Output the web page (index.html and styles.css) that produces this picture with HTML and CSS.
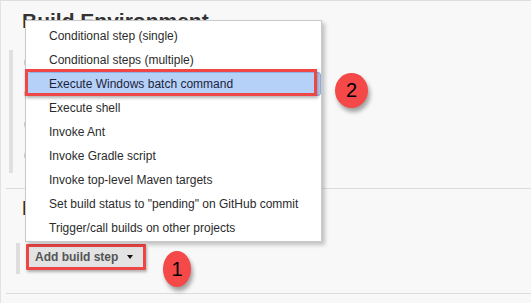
FILE: index.html
```html
<!DOCTYPE html>
<html lang="en">

<head>
    <meta charset="UTF-8">
    <title>Configure</title>
    <link rel="stylesheet" href="styles.css">
</head>

<body>
    <div class="page">
        <section class="block">
            <h2>Build Environment</h2>
            <div class="options">
                <div class="option"><span class="check"></span></div>
                <div class="option"><span class="check"></span></div>
                <div class="option"><span class="check"></span></div>
                <div class="option"><span class="check"></span></div>
            </div>
        </section>

        <section class="block">
            <h2>Build</h2>
            <div class="steps">
                <button class="add-step">Add build step <span class="caret"></span></button>
            </div>
        </section>

        <!-- dropdown opened from the button -->
        <ul class="menu">
            <li>Conditional step (single)</li>
            <li>Conditional steps (multiple)</li>
            <li class="active">Execute Windows batch command</li>
            <li>Execute shell</li>
            <li>Invoke Ant</li>
            <li>Invoke Gradle script</li>
            <li>Invoke top-level Maven targets</li>
            <li>Set build status to "pending" on GitHub commit</li>
            <li>Trigger/call builds on other projects</li>
        </ul>

        <!-- annotations -->
        <div class="mark mark-item"></div>
        <div class="badge badge-one">1</div>
        <div class="badge badge-two">2</div>
    </div>
</body>

</html>
```

FILE: styles.css
```css
html,
body {
    margin: 0;
    height: 100%;
}

body {
    font-family: "Liberation Sans", Arial, sans-serif;
    background-color: #f8f8f8;
}

.page {
    position: relative;
    min-height: 100%;
    box-sizing: border-box;
    border-top: 1px solid #dedede;
    border-left: 1px solid #e2e2e2;
    overflow: hidden;
}

.block {
    margin-left: 5px;
    border-bottom: 1px solid #dcdcdc;
}

.block:first-child {
    padding: 8px 0 15px;
}

.block:nth-child(2) {
    padding: 0 0 19px;
}

h2 {
    margin: 0 0 0 16px;
    font-size: 21px;
    line-height: 24px;
    font-weight: bold;
    color: #333;
}

.block:nth-child(2) h2 {
    margin-top: 7px;
}

.options {
    margin: 17px 0 0 3px;
    padding: 6px 0 11px 11px;
    border-left: 4px solid #e0e0e0;
    display: flex;
    flex-direction: column;
    gap: 18px;
}

.check {
    display: block;
    width: 11px;
    height: 11px;
    border: 1px solid #c2c2c2;
    border-radius: 50%;
    background: #fff;
}

.steps {
    margin: 23px 0 0 10px;
    padding: 1px 0 4px 6px;
    border-left: 4px solid #dedede;
    display: flex;
}

.add-step {
    display: flex;
    align-items: center;
    gap: 9px;
    height: 26px;
    padding: 0 10px 0 6px;
    border: 3px solid #ee4545;
    border-radius: 1px;
    background-color: #e3e3e3;
    box-shadow: 1px 2px 3px rgba(0, 0, 0, 0.3);
    font-family: inherit;
    font-size: 12px;
    font-weight: bold;
    color: #555;
}

.caret {
    width: 0;
    height: 0;
    border-left: 3.5px solid transparent;
    border-right: 3.5px solid transparent;
    border-top: 4px solid #111;
}

.menu {
    position: absolute;
    left: 24px;
    top: 19px;
    width: 297px;
    box-sizing: border-box;
    margin: 0;
    padding: 3px 0 1px;
    list-style: none;
    background: #fff;
    border: 1px solid #c9c9c9;
    box-shadow: 3px 3px 4px rgba(0, 0, 0, 0.22);
}

.menu li {
    height: 24px;
    line-height: 24px;
    padding-left: 23px;
    font-size: 12px;
    color: #2b2b2b;
    white-space: nowrap;
}

.menu li.active {
    margin: 0 0 0 1px;
    padding-left: 21px;
    background-color: #b5d1f8;
    border: 1px solid #8fb1e3;
    border-radius: 3px;
    height: 22px;
    line-height: 22px;
    color: #1e1e3a;
}

.mark {
    position: absolute;
    box-sizing: border-box;
    border: 3px solid #ef4646;
    box-shadow: 1px 2px 3px rgba(0, 0, 0, 0.3);
}

.mark-item {
    left: 24px;
    top: 68px;
    width: 292px;
    height: 27px;
}

.badge {
    position: absolute;
    display: flex;
    justify-content: center;
    align-items: center;
    border-radius: 50%;
    background-color: #f54848;
    box-shadow: 2px 4px 4px rgba(0, 0, 0, 0.35);
    font-size: 20px;
    color: #000;
}

.badge-one {
    left: 162px;
    top: 250px;
    width: 28px;
    height: 36px;
}

.badge-two {
    left: 334px;
    top: 72px;
    width: 33px;
    height: 35px;
}
```
